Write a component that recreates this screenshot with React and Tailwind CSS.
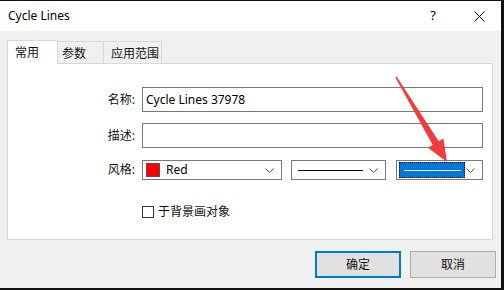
import React from "react";

const font = { fontFamily: '"Segoe UI", "Noto Sans", "Noto Sans CJK SC", sans-serif' };

function Chevron() {
  return (
    <svg width="9" height="5" viewBox="0 0 9 5" className="shrink-0">
      <polyline points="0.5,0.5 4.5,4.5 8.5,0.5" fill="none" stroke="#555" strokeWidth="1" />
    </svg>
  );
}

function Select({ className, children }) {
  return (
    <div className={`flex h-[20px] items-center border border-[#7a7a7a] bg-white pr-[7px] ${className}`}>
      <div className="flex min-w-0 flex-1 items-center">{children}</div>
      <Chevron />
    </div>
  );
}

function Field({ label, children, className = "" }) {
  return (
    <div className={`flex items-center ${className}`}>
      <div className="w-[128px] pr-[1px] text-right text-[12px] text-[#111]">{label}</div>
      <div className="ml-[6px] flex flex-1 items-center">{children}</div>
    </div>
  );
}

export default function App() {
  return (
    <div className="relative h-[290px] w-[504px] overflow-hidden bg-[#111]" style={font}>
      <div className="mt-[1px] flex h-[287px] w-[501px] flex-col bg-[#f0f0f0]">
        {/* title bar */}
        <div className="flex h-[30px] items-center bg-white pl-[8px] text-[12px] font-normal text-black">
          <span className="flex-1">Cycle Lines</span>
          <span className="mr-[38px] text-[13px]">?</span>
          <svg width="11" height="11" viewBox="0 0 11 11" className="mr-[16px]">
            <path d="M0.5 0.5 L10.5 10.5 M10.5 0.5 L0.5 10.5" stroke="#000" strokeWidth="1" />
          </svg>
        </div>

        {/* tabs */}
        <div className="ml-[7px] mt-[9px] flex items-end text-[12px] text-[#111]">
          <div className="relative z-10 -mb-[1px] flex h-[24px] w-[51px] items-center border border-b-0 border-[#d9d9d9] bg-white pl-[7px]">
            常用
          </div>
          <div className="flex h-[22px] w-[46px] items-center border border-l-0 border-b-0 border-[#d9d9d9] pl-[4px] pt-[3px]">
            参数
          </div>
          <div className="flex h-[22px] w-[58px] items-center border border-l-0 border-b-0 border-[#d9d9d9] pl-[7px] pt-[3px]">
            应用范围
          </div>
        </div>

        {/* panel */}
        <div className="ml-[7px] flex h-[177px] w-[486px] flex-col border border-[#d9d9d9] bg-white pr-[9px] pt-[23px]">
          <Field label="名称:">
            <div className="flex h-[25px] flex-1 items-center border border-[#7a7a7a] pl-[3px] text-[12px] text-black">
              Cycle Lines 37978
            </div>
          </Field>
          <Field label="描述:" className="mt-[11px]">
            <div className="h-[25px] flex-1 border border-[#7a7a7a]" />
          </Field>
          <Field label="风格:" className="mt-[12px]">
            <Select className="w-[140px]">
              <span className="ml-[3px] h-[14px] w-[14px] border border-[#555] bg-[#ff0000]" />
              <span className="ml-[6px] text-[12px] text-black">Red</span>
            </Select>
            <Select className="ml-[9px] w-[95px]">
              <span className="ml-[6px] h-[1px] w-[65px] bg-black" />
            </Select>
            <Select className="ml-[10px] w-[87px]">
              <span className="ml-[2px] flex h-[16px] w-[66px] items-center justify-center border border-dotted border-black bg-[#0078d7]">
                <span className="h-[1px] w-[57px] bg-white" />
              </span>
            </Select>
          </Field>
          <div className="ml-[134px] mt-[23px] flex items-center text-[12px] text-[#111]">
            <span className="h-[12px] w-[12px] border border-[#333] bg-white" />
            <span className="ml-[4px]">于背景画对象</span>
          </div>
        </div>

        {/* buttons */}
        <div className="mr-[5px] mt-[11px] flex justify-end gap-[9px] text-[12px] text-[#111]">
          <div className="flex h-[27px] w-[86px] items-center justify-center border-2 border-[#0078d7] bg-[#e1e1e1]">
            确定
          </div>
          <div className="flex h-[27px] w-[86px] items-center justify-center border border-[#adadad] bg-[#e1e1e1]">
            取消
          </div>
        </div>
      </div>

      {/* red annotation arrow */}
      <svg className="pointer-events-none absolute left-0 top-0" width="504" height="290" viewBox="0 0 504 290">
        <polygon
          points="396.6,76.6 438.7,141.3 443.4,138.5 447,162 428,147.7 432.7,144.9 395.4,77.4"
          fill="#f43b3b"
        />
      </svg>
    </div>
  );
}
